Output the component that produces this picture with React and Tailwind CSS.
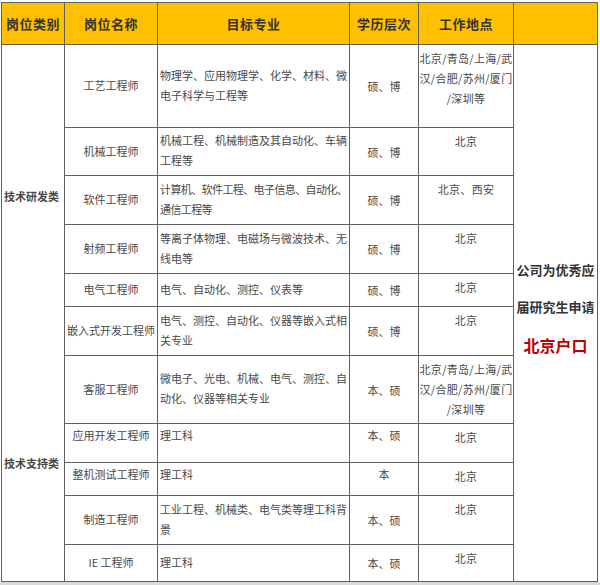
const rows = [
  { cat: "技术研发类", catSpan: 6, name: "工艺工程师", major: ["物理学、应用物理学、化学、材料、微", "电子科学与工程等"], degree: "硕、博", loc: ["北京/青岛/上海/武", "汉/合肥/苏州/厦门", "/深圳等"], h: "h-[83px]" },
  { name: "机械工程师", major: ["机械工程、机械制造及其自动化、车辆", "工程等"], degree: "硕、博", loc: ["北京"], h: "h-[48px]" },
  { name: "软件工程师", major: ["计算机、软件工程、电子信息、自动化、", "通信工程等"], degree: "硕、博", loc: ["北京、西安"], h: "h-[49px]", tight: true },
  { name: "射频工程师", major: ["等离子体物理、电磁场与微波技术、无", "线电等"], degree: "硕、博", loc: ["北京"], h: "h-[49px]" },
  { name: "电气工程师", major: ["电气、自动化、测控、仪表等"], degree: "硕、博", loc: ["北京"], h: "h-[33px]" },
  { name: "嵌入式开发工程师", major: ["电气、测控、自动化、仪器等嵌入式相", "关专业"], degree: "硕、博", loc: ["北京"], h: "h-[49px]" },
  { cat: "技术支持类", catSpan: 5, name: "客服工程师", major: ["微电子、光电、机械、电气、测控、自", "动化、仪器等相关专业"], degree: "本、硕", loc: ["北京/青岛/上海/武", "汉/合肥/苏州/厦门", "/深圳等"], h: "h-[68px]" },
  { name: "应用开发工程师", major: ["理工科"], degree: "本、硕", loc: ["北京"], h: "h-[39px]", top: true },
  { name: "整机测试工程师", major: ["理工科"], degree: "本", loc: ["北京"], h: "h-[33px]", top: true },
  { name: "制造工程师", major: ["工业工程、机械类、电气类等理工科背", "景"], degree: "本、硕", loc: ["北京"], h: "h-[49px]" },
  { name: "IE 工程师", major: ["理工科"], degree: "本、硕", loc: ["北京"], h: "h-[37px]" },
];

export default function App() {
  const cell = "border border-[#606060] text-[11px] leading-[20px] text-[#484848]";
  return (
    <div className="w-[600px] h-[585px] bg-white overflow-hidden" style={{ fontFamily: '"Noto Sans CJK SC", "Noto Sans", sans-serif' }}>
      <div className="pt-[2px] pl-[1px] h-[582px]">
        <table className="table-fixed border-collapse w-[596px]">
          <colgroup>
            <col className="w-[63px]" />
            <col className="w-[93px]" />
            <col className="w-[192px]" />
            <col className="w-[69px]" />
            <col className="w-[95px]" />
            <col className="w-[84px]" />
          </colgroup>
          <thead>
            <tr className="h-[42px] bg-[#ffc000]">
              {["岗位类别", "岗位名称", "目标专业", "学历层次", "工作地点", ""].map((t, i) => (
                <th key={i} className="border border-[#606060] text-[13px] font-bold text-[#333] text-center tracking-[0.5px]">
                  {t}
                </th>
              ))}
            </tr>
          </thead>
          <tbody>
            {rows.map((r, i) => (
              <tr key={i} className={r.h}>
                {r.cat && (
                  <td rowSpan={r.catSpan} className={`${cell} font-bold text-[#333] text-left pl-[2px] ${i === 0 ? "[border-bottom-style:hidden]" : "[border-top-style:hidden]"}`}>
                    <span className={i === 0 ? "block mt-[-8px]" : "block mt-[-10px]"}>{r.cat}</span>
                  </td>
                )}
                <td className={`${cell} text-center ${r.top ? "align-top pt-[1px]" : "align-middle pb-[2px]"}`}>{r.name}</td>
                <td className={`${cell} text-left pl-[2px] whitespace-nowrap ${r.tight ? "tracking-[-0.6px]" : ""} ${r.top ? "align-top pt-[1px]" : "align-middle pb-[3px]"}`}>
                  {r.major.map((m, j) => (
                    <div key={j}>{m}</div>
                  ))}
                </td>
                <td className={`${cell} text-center ${r.top ? "align-top pt-[1px]" : "align-middle"}`}>{r.degree}</td>
                <td className={`${cell} text-center align-top pt-[3px] whitespace-nowrap tracking-[0.3px]`}>
                  {r.loc.map((l, j) => (
                    <div key={j}>{l}</div>
                  ))}
                </td>
                {i === 0 && (
                  <td rowSpan={rows.length} className="border border-[#606060] align-middle text-center">
                    <div className="mt-[-10px] text-[13px] font-bold text-[#333]">公司为优秀应</div>
                    <div className="mt-[18px] text-[13px] font-bold text-[#333]">届研究生申请</div>
                    <div className="mt-[16px] text-[16px] font-bold text-[#c00000]">北京户口</div>
                  </td>
                )}
              </tr>
            ))}
          </tbody>
        </table>
      </div>
      <div className="h-[3px] bg-[#d9d9d9]" />
    </div>
  );
}
